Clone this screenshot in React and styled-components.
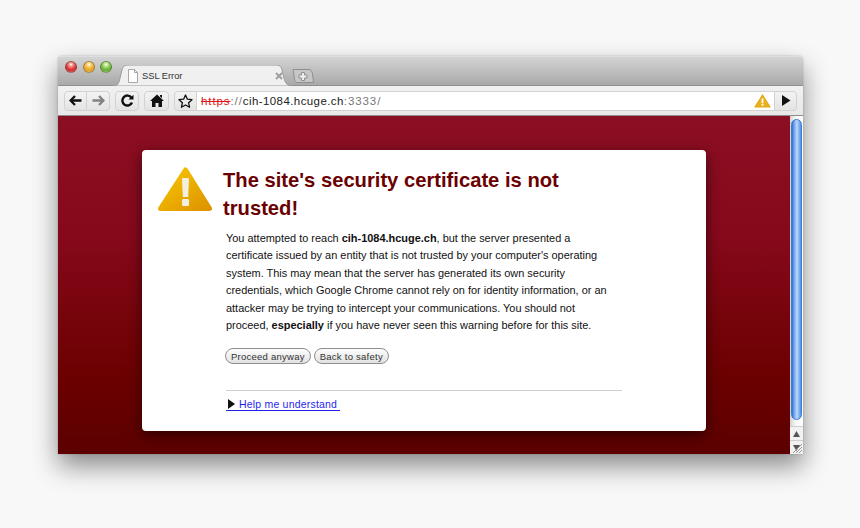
import React from 'react';
import styled, { createGlobalStyle } from 'styled-components';

const Global = createGlobalStyle`
  html, body { margin: 0; padding: 0; background: #f8f8f8; }
  body { width: 860px; height: 528px; overflow: hidden; font-family: "Liberation Sans", Arial, sans-serif; }
`;

const Page = styled.div`
  width: 860px;
  height: 528px;
  padding: 56px 57px 74px 58px;
  box-sizing: border-box;
`;

const Window = styled.div`
  height: 398px;
  display: flex;
  flex-direction: column;
  border-radius: 4px 4px 0 0;
  box-shadow: 0 12px 26px rgba(0, 0, 0, 0.45), 0 0 2px rgba(0, 0, 0, 0.25);
  overflow: hidden;
`;

const TabStrip = styled.div`
  height: 30px;
  flex: none;
  display: flex;
  align-items: flex-end;
  padding-left: 7px;
  background: linear-gradient(#d4d4d4, #a9a9a9);
  border-top: 1px solid #dedede;
  border-bottom: 1px solid #8f8f8f;
  box-sizing: border-box;
  position: relative;
`;

const Lights = styled.div`
  display: flex;
  gap: 5.5px;
  align-self: flex-start;
  padding-top: 4px;
  width: 48px;
  flex: none;
`;

const Light = styled.span`
  width: 12px;
  height: 12px;
  border-radius: 50%;
  border: 1px solid rgba(70, 70, 70, 0.45);
  box-sizing: border-box;
  background: radial-gradient(circle at 50% 25%, #fff 0, ${p => p.$hi} 24%, ${p => p.$c} 62%, ${p => p.$hi} 100%);
`;

const Tab = styled.div`
  position: relative;
  width: 180px;
  height: 21px;
  margin-bottom: -1px;
  flex: none;
  display: flex;
  align-items: center;
  padding: 0 0 0 14px;
  box-sizing: border-box;
  z-index: 1;
`;

const TabShape = styled.svg`
  position: absolute;
  left: 0;
  top: 0;
  z-index: -1;
`;

const TabTitle = styled.span`
  font-size: 9.3px;
  color: #333;
  margin-left: 3px;
  flex: 1;
`;

const TabClose = styled.svg`
  margin-right: 10px;
`;

const NewTab = styled.svg`
  margin: 0 0 2px -1px;
  flex: none;
`;

const Toolbar = styled.div`
  height: 30px;
  flex: none;
  display: flex;
  align-items: center;
  padding: 0 6px 0 6px;
  box-sizing: border-box;
  background: linear-gradient(#f1f1f1, #e8e8e8);
  border-bottom: 1px solid #8c8c8c;
  gap: 5px;
`;

const Btn = styled.div`
  width: ${p => p.$w}px;
  height: 20px;
  display: flex;
  align-items: center;
  justify-content: center;
  flex: none;
  box-sizing: border-box;
  background: linear-gradient(#f3f3f3, #e4e4e4);
  border: 1px solid #d2d2d2;
  border-radius: ${p => p.$r || '4px'};
`;

const Group = styled.div`
  display: flex;
  flex: none;
`;

const JoinedBtn = styled(Btn)`
  border-left: 0;
`;

const UrlBox = styled.div`
  flex: 1;
  height: 20px;
  display: flex;
  align-items: center;
  justify-content: space-between;
  background: #fff;
  border-top: 1px solid #d2d2d2;
  border-bottom: 1px solid #d2d2d2;
  box-sizing: border-box;
  padding: 0 3px 0 4px;
  margin: 0 -5px;
  font-size: 11.5px;
  letter-spacing: 0.9px;
  color: #777;
`;

const Scheme = styled.span`
  color: #e01818;
  text-decoration: line-through;
`;

const Host = styled.span`
  color: #222;
  letter-spacing: 0.42px;
`;

const Content = styled.div`
  flex: 1;
  display: flex;
  min-height: 0;
  background: linear-gradient(#8b0f22 0%, #86091b 35%, #6b0000 78%, #5c0000 100%);
`;

const Main = styled.div`
  flex: 1;
  padding: 34px 84px 0 84px;
  box-sizing: border-box;
`;

const Card = styled.div`
  width: 564px;
  height: 281px;
  box-sizing: border-box;
  background: #fff;
  border-radius: 4px;
  box-shadow: 0 4px 14px rgba(0, 0, 0, 0.55);
  padding: 15px 0 0 16px;
  display: flex;
  flex-direction: column;
`;

const Head = styled.div`
  display: flex;
  gap: 9px;
`;

const Title = styled.h1`
  margin: 1px 0 0;
  width: 350px;
  font-size: 20.2px;
  line-height: 28px;
  font-weight: 700;
  color: #6a0000;
`;

const Body = styled.div`
  padding-left: 68px;
  width: 396px;
  margin-top: 8px;
`;

const Para = styled.p`
  margin: 0;
  font-size: 10.95px;
  line-height: 17.4px;
  color: #111;
  width: 384px;
`;

const Actions = styled.div`
  display: flex;
  gap: 3px;
  margin: 14px 0 0 -1px;
`;

const Pill = styled.button`
  height: 16px;
  padding: 0 5px;
  font: 9.5px "Liberation Sans", Arial, sans-serif;
  letter-spacing: 0.25px;
  color: #333;
  background: linear-gradient(#fdfdfd, #e2e2e2);
  border: 1.5px solid #8e8e8e;
  border-radius: 8px;
  box-sizing: border-box;
`;

const Rule = styled.div`
  height: 1px;
  background: #cfcfcf;
  margin-top: 26px;
`;

const Help = styled.a`
  display: inline-flex;
  align-items: center;
  margin-top: 7px;
  padding-left: 2px;
  font-size: 10.5px;
  line-height: 12px;
  letter-spacing: 0.2px;
  color: #1f1fee;
  text-decoration: none;
  border-bottom: 1px solid #1f1fee;
  white-space: pre;
`;

const Arrow = styled.svg`
  margin-right: 4px;
`;

const Scrollbar = styled.div`
  width: 13px;
  flex: none;
  display: flex;
  flex-direction: column;
  background: linear-gradient(90deg, #d2d2d2, #f5f5f5 40%, #fff);
  position: relative;
`;

const Thumb = styled.div`
  height: 301px;
  margin: 3px 1px 0 1px;
  border-radius: 6px;
  border: 1px solid #3f7ad6;
  box-sizing: border-box;
  background: linear-gradient(90deg, #2f6fd6, #7fb0ee 30%, #bcd8f8 55%, #4f8fe6);
`;

const Track = styled.div`
  flex: 1;
`;

const StepBtn = styled.div`
  height: 13px;
  display: flex;
  align-items: center;
  justify-content: center;
  background: #f1f1f1;
  border-top: 1px solid #cfcfcf;
`;

const Grip = styled.svg`
  position: absolute;
  right: 0;
  bottom: 0;
`;

const WarnSmall = () => (
  <svg width="17" height="14" viewBox="0 0 17 14">
    <path d="M8.5 1 L16 13 H1 Z" fill="#e8b01c" stroke="#e2a810" strokeWidth="1.2" strokeLinejoin="round" />
    <rect x="7.6" y="4.5" width="1.8" height="4.8" fill="#fff" />
    <rect x="7.6" y="10" width="1.8" height="1.7" fill="#fff" />
  </svg>
);

const WarnBig = () => (
  <svg width="56" height="47" viewBox="0 0 56 47" style={{ flex: 'none' }}>
    <defs>
      <linearGradient id="wb" x1="0" y1="0" x2="1" y2="1">
        <stop offset="0" stopColor="#f8c800" />
        <stop offset="1" stopColor="#dd9300" />
      </linearGradient>
    </defs>
    <path d="M27.5 5 L51.5 43.5 H2.5 Z" fill="url(#wb)" stroke="url(#wb)" strokeWidth="5" strokeLinejoin="round" />
    <path d="M24 14 Q24 13 25 13 H30 Q31 13 31 14 L30.2 32 H24.8 Z" fill="#f2efe0" />
    <rect x="24" y="34" width="7" height="7" rx="1.2" fill="#f2efe0" />
  </svg>
);

export default function App() {
  return (
    <Page>
      <Global />
      <Window>
        <TabStrip>
          <Lights>
            <Light $c="#d8262a" $hi="#f08a80" />
            <Light $c="#e8a020" $hi="#f6d070" />
            <Light $c="#62b030" $hi="#b8e080" />
          </Lights>
          <Tab>
            <TabShape width="180" height="21" viewBox="0 0 180 21">
              <path d="M0 21 C5 21 6 18 7 13 L9 5 C10 1 12 0 15 0 H163 C166 0 168 1 169 5 L171 13 C172 18 174 21 180 21 Z" fill="#f0f0f0" stroke="#9a9a9a" />
            </TabShape>
            <svg width="12" height="14" viewBox="0 0 12 14" style={{ flex: 'none' }}>
              <path d="M1.5 .5 H7.5 L10.5 3.5 V13.5 H1.5 Z" fill="#fff" stroke="#a8a8a8" />
              <path d="M7.5 .5 V3.5 H10.5" fill="none" stroke="#a8a8a8" />
            </svg>
            <TabTitle>SSL Error</TabTitle>
            <TabClose width="8" height="8" viewBox="0 0 8 8">
              <path d="M1 1 L7 7 M7 1 L1 7" stroke="#a0a0a0" strokeWidth="2" />
            </TabClose>
          </Tab>
          <NewTab width="22" height="14" viewBox="0 0 22 14">
            <path d="M1 .5 H17 C19 .5 20 2 20.5 5 L21.5 13.5 H5 C3.5 13.5 3 12 2.5 10 Z" fill="#c6c6c6" stroke="#8f8f8f" />
            <path d="M9.5 3.5 h3 v2.5 h2.5 v3 h-2.5 v2.5 h-3 v-2.5 h-2.5 v-3 h2.5 Z" fill="#ececec" stroke="#8f8f8f" />
          </NewTab>
        </TabStrip>
        <Toolbar>
          <Group>
            <Btn $w={23} $r="4px 0 0 4px">
              <svg width="13" height="11" viewBox="0 0 13 11"><path d="M6 1 L1.6 5.5 L6 10" fill="none" stroke="#111" strokeWidth="2.3" /><path d="M2.5 5.5 H12.5" stroke="#111" strokeWidth="2.6" /></svg>
            </Btn>
            <JoinedBtn $w={23} $r="0 4px 4px 0">
              <svg width="13" height="11" viewBox="0 0 13 11"><path d="M7 1 L11.4 5.5 L7 10" fill="none" stroke="#808080" strokeWidth="2.3" /><path d="M.5 5.5 H10.5" stroke="#808080" strokeWidth="2.6" /></svg>
            </JoinedBtn>
          </Group>
          <Btn $w={24}>
            <svg width="13" height="13" viewBox="0 0 13 13"><path d="M10.5 3.7 A5 5 0 1 0 11 8.5" fill="none" stroke="#111" strokeWidth="2.4" /><path d="M7.5 5.5 H12.5 V0.8 Z" fill="#111" /></svg>
          </Btn>
          <Btn $w={25}>
            <svg width="14" height="13" viewBox="0 0 14 13"><path d="M7 .5 L14 7 H12 V13 H8.5 V9 H5.5 V13 H2 V7 H0 Z M10 1 H12 V4 L10 2.5 Z" fill="#111" /></svg>
          </Btn>
          <Group>
            <Btn $w={23} $r="4px 0 0 4px">
              <svg width="15" height="14" viewBox="0 0 15 14"><path d="M7.5 1 L9.4 5.2 L14 5.7 L10.6 8.8 L11.6 13.3 L7.5 11 L3.4 13.3 L4.4 8.8 L1 5.7 L5.6 5.2 Z" fill="none" stroke="#111" strokeWidth="1.3" strokeLinejoin="round" /></svg>
            </Btn>
          </Group>
          <UrlBox>
            <span><Scheme>https</Scheme>://<Host>cih-1084.hcuge.ch</Host>:3333/</span>
            <WarnSmall />
          </UrlBox>
          <Btn $w={23} $r="0 4px 4px 0">
            <svg width="10" height="11" viewBox="0 0 10 11"><path d="M1 0 L9.5 5.5 L1 11 Z" fill="#111" /></svg>
          </Btn>
        </Toolbar>
        <Content>
          <Main>
            <Card>
              <Head>
                <WarnBig />
                <Title>The site's security certificate is not trusted!</Title>
              </Head>
              <Body>
                <Para>
                  You attempted to reach <b>cih-1084.hcuge.ch</b>, but the server presented a certificate issued by an entity that is not trusted by your computer's operating system. This may mean that the server has generated its own security credentials, which Google Chrome cannot rely on for identity information, or an attacker may be trying to intercept your communications. You should not proceed, <b>especially</b> if you have never seen this warning before for this site.
                </Para>
                <Actions>
                  <Pill>Proceed anyway</Pill>
                  <Pill>Back to safety</Pill>
                </Actions>
                <Rule />
                <Help href="#">
                  <Arrow width="7" height="10" viewBox="0 0 7 10"><path d="M0 0 L7 5 L0 10 Z" fill="#111" /></Arrow>
                  {'Help me understand '}
                </Help>
              </Body>
            </Card>
          </Main>
          <Scrollbar>
            <Thumb />
            <Track />
            <StepBtn><svg width="7" height="6" viewBox="0 0 7 6"><path d="M3.5 0 L7 6 H0 Z" fill="#555" /></svg></StepBtn>
            <StepBtn><svg width="7" height="6" viewBox="0 0 7 6"><path d="M0 0 H7 L3.5 6 Z" fill="#555" /></svg></StepBtn>
            <Grip width="11" height="11" viewBox="0 0 11 11"><path d="M1 10 L10 1 M4 10 L10 4 M7 10 L10 7" stroke="#999" /></Grip>
          </Scrollbar>
        </Content>
      </Window>
    </Page>
  );
}
